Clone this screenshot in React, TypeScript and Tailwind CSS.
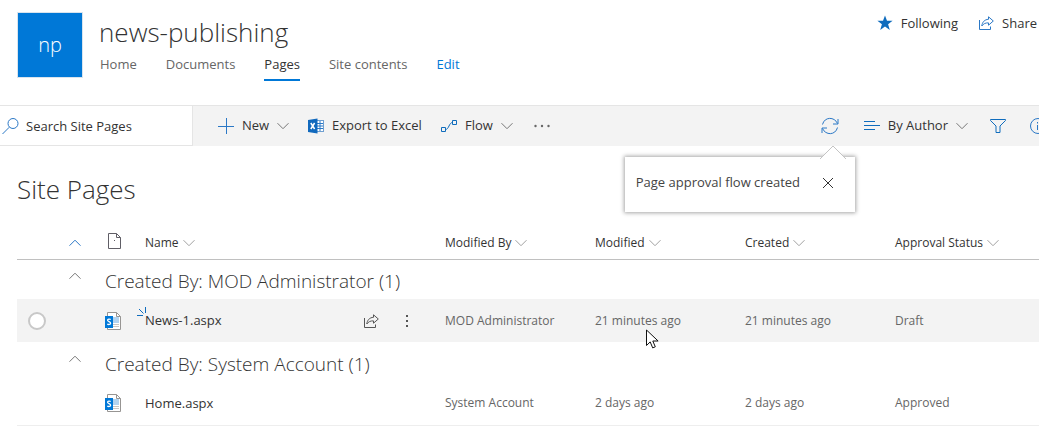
import type { ReactNode } from 'react';

function Chevron({ up = false, className = 'text-[#767676]' }: { up?: boolean; className?: string }) {
  return (
    <svg aria-hidden="true" width="12" height="8" viewBox="0 0 12 8" fill="none" stroke="currentColor" className={`shrink-0 ${className}`}>
      <path d={up ? 'M.5 6.7 6 1.2l5.500 5.500' : 'M.5 1.200 6 6.700l5.500-5.500'} />
    </svg>
  );
}

function ShareIcon() {
  return (
    <svg aria-hidden="true" width="16" height="16" viewBox="0 0 16 16" fill="none" stroke="currentColor" className="shrink-0">
      <path d="M1.500 5v9.500h11V11.500" />
      <path d="M10.500 1.800 15.300 6l-4.800 4.200V7.900C7.500 7.700 5.500 8.700 3.800 11 4.200 7.200 6.500 4.500 10.500 4.300z" />
    </svg>
  );
}

function ExcelIcon() {
  return (
    <svg aria-hidden="true" width="16" height="16" viewBox="0 0 16 16" className="shrink-0">
      <rect x="8.500" y="2.500" width="7" height="11" fill="#fff" stroke="#6f9fd0" />
      <path d="M9 5.500h6M9 8h6M9 10.500h6M12 3v10" stroke="#2b78c6" />
      <path d="M0 2 9.500.5v15L0 14z" fill="#1169bd" />
      <path d="m2.800 5 3.800 6M6.600 5l-3.800 6" stroke="#fff" strokeWidth="1.500" />
    </svg>
  );
}

function PageIcon() {
  return (
    <svg aria-hidden="true" width="16" height="18" viewBox="0 0 16 18" fill="none">
      <path d="M2.500.5h9l4 4v13h-13z" fill="#fff" stroke="#979593" />
      <path d="M11.500.5v4h4" stroke="#979593" />
      <path d="M8 5h6v6H8z" fill="#b3d3ef" />
      <path d="M8 12.500h6M8 14.500h6" stroke="#c8c6c4" />
      <path d="M0 4h8v12H0z" fill="#0078d7" />
      <path d="M5.700 7.600C4.800 6.800 2.600 6.900 2.600 8.300c0 1.600 3 1.200 3 2.900 0 1.500-2.300 1.600-3.300.8" stroke="#fff" strokeWidth="1.300" />
    </svg>
  );
}

const navItems = ['Home', 'Documents', 'Pages', 'Site contents'];

function Header() {
  return (
    <header className="flex pt-3 pl-[17px]">
      <div className="flex size-[66px] shrink-0 items-center justify-center border border-[#d8e4ee] bg-[#0078d7] text-xl font-light text-white">np</div>
      <div className="ml-4 grow">
        <h1 className="mt-1 text-[26px] leading-8 font-light">news-publishing</h1>
        <nav className="mt-1 flex gap-[29px] pl-px text-[13px] leading-6 text-[#666]">
          {navItems.map((item) => (
            <a key={item} href="#" aria-current={item === 'Pages' ? 'page' : undefined} className="border-b-2 border-transparent pb-[3px] aria-[current=page]:border-[#0078d7] aria-[current=page]:text-[#333]">
              {item}
            </a>
          ))}
          <a href="#" className="text-[#0078d7]">Edit</a>
        </nav>
      </div>
      <div className="flex shrink-0 items-start gap-5 pr-[2px] text-[13px] leading-[22px]">
        <button className="flex items-center gap-2">
          <svg aria-hidden="true" width="16" height="16" viewBox="0 0 16 16" fill="#0f6cbd">
            <path d="m8 .5 2 5.300h5.600l-4.500 3.500 1.700 5.700L8 11.600 3.200 15l1.700-5.700L.4 5.800H6z" />
          </svg>
          Following
        </button>
        <button className="flex items-center gap-2">
          <span className="text-[#2b78c6]"><ShareIcon /></span>
          Share
        </button>
      </div>
    </header>
  );
}

function Callout() {
  return (
    <div role="status" className="absolute top-10 -right-4 z-10 flex h-[55px] w-[230px] items-center bg-white pb-1 pl-[11px] text-[13px] text-[#444] shadow-[0_0_4px_1px_rgba(0,0,0,0.35)]">
      <svg aria-hidden="true" width="26" height="14" viewBox="0 0 26 14" className="absolute -top-[12px] right-[9px]">
        <path d="M0 14 13 1l13 13" fill="#fff" stroke="#c4c4c4" />
        <path d="M1 14 13 2l12 12z" fill="#fff" />
      </svg>
      <span className="whitespace-nowrap">Page approval flow created</span>
      <button aria-label="Close" className="absolute right-[21px]">
        <svg aria-hidden="true" width="12" height="12" viewBox="0 0 12 12" stroke="#333">
          <path d="m1 1 10 10M11 1 1 11" />
        </svg>
      </button>
    </div>
  );
}

function CommandBar() {
  return (
    <div className="flex h-[41px] border-t border-[#e5e5e5] bg-[#f3f3f3] text-[13px]">
      <div className="flex w-[193px] shrink-0 items-center gap-[6px] border-r border-b border-[#e5e5e5] bg-white pl-[2px]">
        <svg aria-hidden="true" width="18" height="18" viewBox="0 0 18 18" fill="none" stroke="#2b78c6" className="shrink-0">
          <circle cx="11" cy="6.500" r="5" />
          <path d="M7.300 10.200.5 17" />
        </svg>
        <input type="search" aria-label="Search Site Pages" placeholder="Search Site Pages" className="h-8 w-full min-w-0 outline-none placeholder:text-[#333] placeholder:opacity-100" />
      </div>
      <div className="flex shrink-0 items-center pl-[25px]">
        <button className="flex w-[90px] items-center gap-2">
          <svg aria-hidden="true" width="16" height="16" viewBox="0 0 16 16" stroke="#2b78c6" className="shrink-0">
            <path d="M8.500 0v16M0 8.500h16" />
          </svg>
          New
          <Chevron />
        </button>
        <button className="flex w-[133px] items-center gap-2 whitespace-nowrap">
          <ExcelIcon />
          Export to Excel
        </button>
        <button className="flex w-[93px] items-center gap-2">
          <svg aria-hidden="true" width="16" height="12" viewBox="0 0 16 12" fill="none" stroke="#0f6cbd" className="shrink-0">
            <path d="M.5 7.500h4v4h-4zM11.500.5h4v4h-4zM4.500 9.500C8 9.500 8 2.500 11.500 2.500" />
          </svg>
          Flow
          <Chevron />
        </button>
        <button aria-label="More">
          <svg aria-hidden="true" width="16" height="4" viewBox="0 0 16 4" fill="#666">
            <circle cx="1.500" cy="2" r="1.200" /><circle cx="8" cy="2" r="1.200" /><circle cx="14.500" cy="2" r="1.200" />
          </svg>
        </button>
      </div>
      <div className="-mr-[7px] ml-auto flex shrink-0 items-center">
        <div className="relative flex items-center">
          <button aria-label="Refresh">
            <svg aria-hidden="true" width="18" height="18" viewBox="0 0 18 18" fill="none" stroke="#2b78c6">
              <path d="M1.500 7.500C3.500-.5 13.500-.5 16.500 6.500M17 2v5h-5M16.500 10.500c-2 8-12 8-15 1M1 16v-5h5" />
            </svg>
          </button>
          <Callout />
        </div>
        <button className="ml-[25px] flex items-center gap-2 whitespace-nowrap">
          <svg aria-hidden="true" width="16" height="12" viewBox="0 0 16 12" stroke="#0f6cbd" className="shrink-0">
            <path d="M0 1.500h11M0 5.500h16M0 9.500h11" />
          </svg>
          By Author
          <Chevron />
        </button>
        <button aria-label="Filter" className="ml-[22px]">
          <svg aria-hidden="true" width="16" height="16" viewBox="0 0 16 16" fill="none" stroke="#0f6cbd">
            <path d="M.5 1.500h15v1l-5.500 5.500v6.500H6V8L.5 2.500z" />
          </svg>
        </button>
        <button aria-label="Details" className="ml-[24px]">
          <svg aria-hidden="true" width="16" height="16" viewBox="0 0 16 16" fill="none" stroke="#2b78c6">
            <circle cx="8" cy="8" r="7.500" />
            <path d="M7.500 7v5M7.500 4v1.500" />
          </svg>
        </button>
      </div>
    </div>
  );
}

function GroupRow({ label, children }: { label: string; children: ReactNode }) {
  return (
    <tbody>
      <tr className="h-10">
        <td />
        <td className="pb-[10px] text-center align-middle">
          <button aria-label={`Collapse ${label}`}><Chevron up /></button>
        </td>
        <th colSpan={6} scope="rowgroup" className="pt-1 pl-3 text-left text-[19px] leading-7 font-light">{label}</th>
      </tr>
      {children}
    </tbody>
  );
}

const cell = 'truncate pl-3 text-xs text-[#666]';
const columns = ['Name', 'Modified By', 'Modified', 'Created', 'Approval Status'];

function PagesTable() {
  return (
    <table className="w-full table-fixed border-collapse">
      <colgroup>
        <col className="w-10" />
        <col className="w-9" />
        <col className="w-10" />
        <col className="w-[300px]" />
        <col className="w-[150px]" />
        <col className="w-[150px]" />
        <col className="w-[150px]" />
        <col />
      </colgroup>
      <thead>
        <tr className="h-[35px] border-b border-[#c0c0c0]">
          <td />
          <td className="text-center">
            <button aria-label="Collapse all" className="align-middle"><Chevron up className="text-[#2b78c6]" /></button>
          </td>
          <th scope="col" aria-label="File type" className="pl-[15px]">
            <svg aria-hidden="true" width="13" height="16" viewBox="0 0 13 16" fill="none" stroke="#605e66">
              <path d="M.5.5h8l4 4v11H.500zM8.500.5v4h4" />
              <path d="M6 7.500h1" />
            </svg>
          </th>
          {columns.map((name) => (
            <th key={name} scope="col" className="pt-[3px] pl-3 text-left text-xs font-normal whitespace-nowrap">
              <button className="flex items-center gap-1">{name}<Chevron className="text-[#a0a0a0]" /></button>
            </th>
          ))}
        </tr>
      </thead>
      <GroupRow label="Created By: MOD Administrator (1)">
        <tr className="h-[43px] bg-[#f3f3f3]">
          <td className="pl-[11px]">
            <input type="checkbox" aria-label="Select News-1.aspx" className="block size-[18px] appearance-none rounded-full border-2 border-[#c8c8c8] bg-white" />
          </td>
          <td />
          <td className="pl-3"><PageIcon /></td>
          <td className="pl-3">
            <div className="flex items-center">
              <a href="#" className="relative mr-auto text-[13px]">
                <svg aria-hidden="true" width="11" height="11" viewBox="0 0 11 11" stroke="#0f6cbd" className="absolute -top-1 -left-2">
                  <path d="M0 8.500h6M2 2l4.500 4.500M8.500 0v6" />
                </svg>
                News-1.aspx
              </a>
              <button aria-label="Share" className="mr-[26px] text-[#555]"><ShareIcon /></button>
              <button aria-label="More actions" className="mr-6">
                <svg aria-hidden="true" width="4" height="14" viewBox="0 0 4 14" fill="#555">
                  <path d="M1 1h2v2H1zM1 6h2v2H1zM1 11h2v2H1z" />
                </svg>
              </button>
            </div>
          </td>
          <td className={cell}>MOD Administrator</td>
          <td className="relative pl-3 text-xs text-[#666]">
            21 minutes ago
            <svg aria-hidden="true" width="13" height="20" viewBox="0 0 13 20" className="absolute top-[30px] left-[63px] z-10">
              <path d="M.5 1v15.500l3.700-3.600 2.500 6 2.600-1.100-2.500-5.800h5.300z" fill="#fff" stroke="#111" />
            </svg>
          </td>
          <td className={cell}>21 minutes ago</td>
          <td className={cell}>Draft</td>
        </tr>
      </GroupRow>
      <GroupRow label="Created By: System Account (1)">
        <tr className="h-[43px] border-b border-[#eee]">
          <td />
          <td />
          <td className="pl-3"><PageIcon /></td>
          <td className="pl-3 text-[13px]"><a href="#">Home.aspx</a></td>
          <td className={cell}>System Account</td>
          <td className={cell}>2 days ago</td>
          <td className={cell}>2 days ago</td>
          <td className={cell}>Approved</td>
        </tr>
      </GroupRow>
    </table>
  );
}

export default function App() {
  return (
    <div className="min-h-screen overflow-x-hidden bg-white font-['Open_Sans','Noto_Sans',sans-serif] text-[#333]">
      <Header />
      <div className="mt-6">
        <CommandBar />
      </div>
      <main className="pt-[23px] pl-[17px]">
        <h2 className="mb-[15px] text-[26px] leading-10 font-light">Site Pages</h2>
        <PagesTable />
      </main>
    </div>
  );
}
